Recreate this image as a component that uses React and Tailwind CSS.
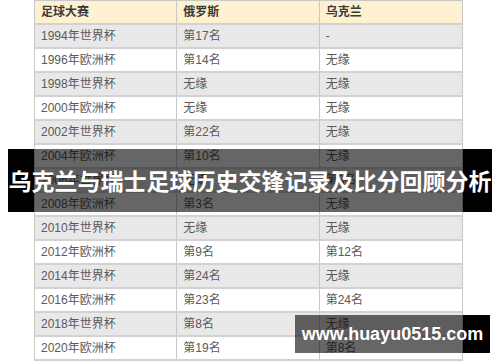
import React from 'react'

const rows = [
  ['1994年世界杯', '第17名', '-'],
  ['1996年欧洲杯', '第14名', '无缘'],
  ['1998年世界杯', '无缘', '无缘'],
  ['2000年欧洲杯', '无缘', '无缘'],
  ['2002年世界杯', '第22名', '无缘'],
  ['2004年欧洲杯', '第10名', '无缘'],
  ['2006年世界杯', '无缘', '第8名'],
  ['2008年欧洲杯', '第3名', '无缘'],
  ['2010年世界杯', '无缘', '无缘'],
  ['2012年欧洲杯', '第9名', '第12名'],
  ['2014年世界杯', '第24名', '无缘'],
  ['2016年欧洲杯', '第23名', '第24名'],
  ['2018年世界杯', '第8名', '无缘'],
  ['2020年欧洲杯', '第19名', '第8名'],
]

const font = { fontFamily: '"Liberation Sans", "Noto Sans CJK SC", sans-serif' }

const Row = ({ cells, bg, head }) => (
  <div className={`grid grid-cols-3 h-[24px] border-b-2 border-[#d2d2d2] ${bg}`}>
    {cells.map((c, i) => (
      <div
        key={i}
        className={`flex items-center px-[6px] text-[12px] ${i < 2 ? 'border-r border-[#c8c8c8]' : ''} ${
          head ? 'font-bold text-[#3a3a3a]' : 'text-[#5a5a5a]'
        }`}
      >
        {c}
      </div>
    ))}
  </div>
)

export default function App() {
  return (
    <div className="relative w-[500px] h-[362px] bg-white overflow-hidden" style={font}>
      <div className="ml-[34px] w-[429px] border-x border-t border-[#c8c8c8]">
        <Row cells={['足球大赛', '俄罗斯', '乌克兰']} bg="bg-[#fdf1d0]" head />
        {rows.map((r, i) => (
          <Row key={r[0]} cells={r} bg={i % 2 === 0 ? 'bg-[#e8e8e8]' : 'bg-white'} />
        ))}
      </div>

      {/* title band */}
      <div className="absolute left-[8px] top-[149px] w-[484px] h-[63px] flex">
        <div className="w-[26px] bg-black" />
        <div className="w-[429px] bg-black/60" />
        <div className="flex-1 bg-black" />
        <div className="absolute inset-0 flex items-center justify-center text-white font-bold text-[23px] whitespace-nowrap"
          style={{ fontFamily: '"Noto Sans CJK SC", sans-serif' }}>
          乌克兰与瑞士足球历史交锋记录及比分回顾分析
        </div>
      </div>

      {/* watermark */}
      <div className="absolute left-[295px] top-[315px] w-[195px] h-[38px] flex">
        <div className="w-[168px] bg-black/60" />
        <div className="flex-1 bg-black" />
        <div className="absolute inset-0 flex items-center justify-center text-white font-bold text-[18px] whitespace-nowrap">
          www.huayu0515.com
        </div>
      </div>
    </div>
  )
}
